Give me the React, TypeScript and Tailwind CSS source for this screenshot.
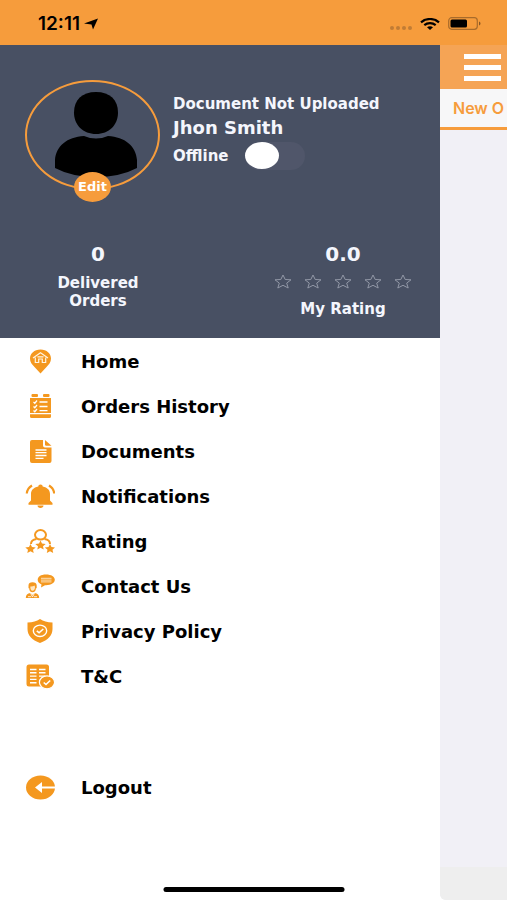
import React, { useState } from "react";

const ORANGE = "#f4981f";

function HomeIcon() {
  return (
    <svg viewBox="0 0 30 28" className="h-7 w-[30px]" fill={ORANGE} aria-hidden="true">
      <path d="M15.500 1.500C9.200 1.500 5 5.500 5 10.500c0 3.500 2 6 4.500 8.500l6 6.500 6-6.500c2.500-2.500 4.500-5 4.500-8.500 0-5-4.200-9-10.500-9z" />
      <path d="M8 10 15.500 4.800 23 10M10.300 9.500v5h3.400V11h3.600v3.500h3.400v-5M12.500 8.800h6" fill="none" stroke="#fff3df" strokeWidth="1.200" />
    </svg>
  );
}

function OrdersIcon() {
  return (
    <svg viewBox="0 0 30 28" className="h-7 w-[30px]" fill={ORANGE} aria-hidden="true">
      <rect x="6.500" y="1" width="6.500" height="3" rx="1" />
      <rect x="18" y="1" width="6.500" height="3" rx="1" />
      <path d="M5 5h21v15H5zM5 21.300h21v2.200q0 1.500-1.500 1.500h-18Q5 25 5 23.500z" />
      <path d="M8.500 9l1.300 1.200L12 7.500M8.500 13.500l1.300 1.200L12 12M8.500 17.500l1.300 1.200L12 16M14.500 9h8M14.500 13.500h8M14.500 17.700h8" fill="none" stroke="#fff" strokeWidth="1.300" />
    </svg>
  );
}

function DocumentIcon() {
  return (
    <svg viewBox="0 0 30 28" className="h-7 w-[30px]" fill={ORANGE} aria-hidden="true">
      <path d="M7 2h11v5.500q0 2 2 2h6.500V23q0 2-2 2H7q-2 0-2-2V4q0-2 2-2z" />
      <path d="M20 2l6.500 5.800h-5.300Q20 7.800 20 6.600z" />
      <path d="M10.500 12h11M10.500 14.700h11M10.500 17.500h11M10.500 20.300h8" stroke="#fff" strokeWidth="1.300" />
    </svg>
  );
}

function BellIcon() {
  return (
    <svg viewBox="0 0 30 28" className="h-7 w-[30px]" fill={ORANGE} aria-hidden="true">
      <path d="M15.500 1.500c1.300 0 2.200.8 2.200 2 5 1 7.300 4 7.300 7.500v6.500l2.500 2.500v1.800h-24V20L6 17.500V11c0-3.500 2.300-6.500 7.300-7.500 0-1.200.9-2 2.200-2zM12.500 22.500h6c0 1.500-1.200 2.500-3 2.500s-3-1-3-2.500z" />
      <path d="M1.800 10.500C2 7.500 3.700 4.500 7 2.500M29.200 10.500c-.2-3-1.900-6-5.200-8" fill="none" stroke={ORANGE} strokeWidth="2.200" />
    </svg>
  );
}

function RatingIcon() {
  return (
    <svg viewBox="0 0 30 28" className="h-7 w-[30px]" fill={ORANGE} aria-hidden="true">
      <ellipse cx="15.500" cy="6.800" rx="5.500" ry="4.800" fill="none" stroke={ORANGE} strokeWidth="2" />
      <path d="M6 16c0-2.500 2-4.500 5.500-5M25 16c0-2.500-2-4.500-5.500-5" fill="none" stroke={ORANGE} strokeWidth="2" />
      <path d="m15.500 12.500 1.500 3 3.700.4-2.700 2.300.7 3.300-3.200-1.700-3.200 1.700.7-3.300-2.700-2.300 3.700-.4z" />
      <path d="m5.500 16 1.500 3 3.700.4L8 21.700l.7 3.300-3.200-1.700L2.300 25l.7-3.300-2.700-2.300L4 19z" />
      <path d="m25 16 1.500 3 3.500.4-2.500 2.300.7 3.300-3.200-1.700-3.200 1.700.7-3.300-2.700-2.300 3.700-.4z" />
    </svg>
  );
}

function ContactIcon() {
  return (
    <svg viewBox="0 0 30 28" className="h-7 w-[30px]" fill={ORANGE} aria-hidden="true">
      <path d="M21 1.500c5.300 0 8.800 2.200 8.800 5.300S26.300 12.200 21 12.200h-1L16 14.500l.5-3c-2.400-.9-3.800-2.700-3.800-4.700 0-3.100 3-5.300 8.300-5.300z" />
      <path d="M16 5.300h10.500M16 7.100h10.500M16 8.900h10.500" stroke="#fff3df" strokeWidth=".8" />
      <path d="M3.500 12.500C3.500 10.500 5 9.300 7.500 9.300s4.200 1.200 4.200 3.200v2.800h-.8c0 2.700-1.400 3.900-3.400 3.900s-3.300-1.200-3.300-3.900h-.7z" />
      <path d="M5.300 13.500q2.500.2 4.200-1l.5 1.500c0 2.300-1 3.700-2.500 3.700s-2.200-1.500-2.200-4.200z" fill="#ffe7c2" />
      <path d="M.8 25c0-3.300 1.500-4.500 4.700-5l2 2 2-2c3.200.5 4.700 1.700 4.700 5z" />
      <path d="M5.500 20l2 4 2-4M3 23.700h3M9 23.700h3" fill="none" stroke="#fff" strokeWidth=".8" />
    </svg>
  );
}

function PrivacyIcon() {
  return (
    <svg viewBox="0 0 30 28" className="h-7 w-[30px]" fill={ORANGE} aria-hidden="true">
      <path d="M15 1c3.500 2.300 7 3.200 12.500 3.500V11c0 6.500-4.500 11-12.500 14C7 22 2.500 17.500 2.500 11V4.500C8 4.200 11.500 3.300 15 1z" />
      <ellipse cx="15" cy="12.800" rx="6.700" ry="5.700" fill="none" stroke="#fff" strokeWidth="1.400" />
      <path d="m11.800 12.800 2.300 2 4.200-3.800" fill="none" stroke="#fff" strokeWidth="1.600" />
    </svg>
  );
}

function TermsIcon() {
  return (
    <svg viewBox="0 0 30 28" className="h-7 w-[30px]" fill={ORANGE} aria-hidden="true">
      <rect x="1.500" y="1.500" width="22.500" height="22" rx="2.500" />
      <path d="M5 6.500h6.500M14 6.500h6.500M5 9.800h6.500M14 9.800h6.500M5 13.100h6.500M14 13.100h6.500M5 16.400h6.500M5 19.700h6.500" stroke="#fff" strokeWidth="1.400" />
      <ellipse cx="22" cy="19.300" rx="7.600" ry="6.500" stroke="#fff" strokeWidth="1.200" />
      <path d="m18.700 19.500 2.300 2 4.200-4" fill="none" stroke="#fff" strokeWidth="1.600" />
    </svg>
  );
}

function LogoutIcon() {
  return (
    <svg viewBox="0 0 30 28" className="h-7 w-[30px]" aria-hidden="true">
      <ellipse cx="15.500" cy="13.500" rx="14.500" ry="12" fill={ORANGE} />
      <path d="M10 13.500 17 8v4.500h13v2H17V19z" fill="#fff" />
    </svg>
  );
}

const items = [
  { label: "Home", Icon: HomeIcon },
  { label: "Orders History", Icon: OrdersIcon },
  { label: "Documents", Icon: DocumentIcon },
  { label: "Notifications", Icon: BellIcon },
  { label: "Rating", Icon: RatingIcon },
  { label: "Contact Us", Icon: ContactIcon },
  { label: "Privacy Policy", Icon: PrivacyIcon },
  { label: "T&C", Icon: TermsIcon },
];

function MenuLink({ label, Icon }: { label: string; Icon: () => React.JSX.Element }) {
  return (
    <a href="#" className="flex h-[45px] items-center gap-[26px] pl-[25px] text-[18px] font-semibold text-black">
      <Icon />
      {label}
    </a>
  );
}

function StatusBar() {
  return (
    <header className="flex h-[45px] items-center justify-between bg-[#f69c3c] pt-0.5 pr-[26px] pl-[38px] text-black">
      <div className="flex items-center gap-1 font-['Inter',sans-serif] text-[19px] leading-6 font-semibold">
        12:11
        <svg viewBox="0 0 14 12" className="h-3 w-3.5" aria-hidden="true">
          <path d="M14 .5 9 11.500 7.500 6.500 0 5.500z" />
        </svg>
      </div>
      <div className="flex items-center gap-2">
        <svg viewBox="0 0 24 14" className="h-3.5 w-6" fill="#c17c35" aria-hidden="true">
          <circle cx="4" cy="11" r="2" />
          <circle cx="10" cy="11" r="2" />
          <circle cx="16" cy="11" r="2" />
          <circle cx="22" cy="11" r="2" />
        </svg>
        <svg viewBox="0 0 20 12" className="h-3 w-5" fill="none" stroke="#000" strokeWidth="2.200" aria-hidden="true">
          <path d="M1 4.300C6-.1 14-.1 19 4.300M4.300 7.200c3.300-2.700 8.100-2.700 11.400 0" />
          <path d="M7 9.300c1.800-1.300 4.200-1.300 6 0l-3 2.700z" fill="#000" stroke="none" />
        </svg>
        <svg viewBox="0 0 33 13" className="h-[13px] w-[33px]" aria-hidden="true">
          <rect x=".7" y=".7" width="28.600" height="11.600" rx="3" fill="none" stroke="#a86b2b" strokeWidth="1.200" />
          <rect x="2.500" y="2.500" width="16.500" height="8" rx="1.500" />
          <path d="M31 4.500c2 .7 2 3.300 0 4z" fill="#8a5824" />
        </svg>
      </div>
    </header>
  );
}

function Profile() {
  const [online, setOnline] = useState(false);
  return (
    <section className="h-[293px] bg-[#485063] pt-[35px] text-[#f4f6fd]">
      <div className="flex gap-[13px] pl-[25px]">
        <div className="relative h-[110px] w-[135px] shrink-0 rounded-[50%] border-2 border-[#f69c3c]">
          <svg viewBox="0 0 84 86" className="absolute top-[9px] left-[27px] h-[86px] w-[84px]" aria-hidden="true">
            <path d="M42 1c14 0 22 8 22 20.500S55 43 42 43 20 34 20 21.500 28 1 42 1z" />
            <path d="M30 45q12 5 24 0c17 1 28 10 29 24v8Q66 86 42 86T1 77v-8C2 55 13 46 30 45z" />
          </svg>
          <button className="absolute top-[90px] left-[47px] h-[30px] w-[37px] rounded-[50%] bg-[#f69c3c] text-[13px] font-semibold text-white">
            Edit
          </button>
        </div>
        <div className="pt-3.5 font-semibold">
          <p className="text-[15px] leading-5">Document Not Uploaded</p>
          <p className="text-[18px] leading-7">Jhon Smith</p>
          <label className="flex h-7 items-center gap-4 text-[15px]">
            Offline
            <input
              type="checkbox"
              role="switch"
              checked={online}
              onChange={() => setOnline(!online)}
              className="h-7 w-[60px] appearance-none rounded-full bg-[#50566a] before:block before:h-[27px] before:w-[34px] before:rounded-[50%] before:bg-white checked:bg-[#f69c3c] checked:before:ml-auto"
            />
          </label>
        </div>
      </div>
      <div className="mt-[52px] flex justify-between pr-[28px] pl-[47px] text-center font-semibold">
        <div className="w-[102px]">
          <p className="text-[20px] leading-6">0</p>
          <p className="mt-2 text-[15px] leading-[18px]">Delivered Orders</p>
        </div>
        <div>
          <p className="text-[20px] leading-6">0.0</p>
          <div className="mt-2 flex gap-3" role="img" aria-label="0 of 5 stars">
            {[1, 2, 3, 4, 5].map((n) => (
              <svg key={n} viewBox="0 0 18 15" className="h-[15px] w-[18px]" fill="none" stroke="#9197a6" aria-hidden="true">
                <path d="M9 1l2.200 4.500 5.800.3-4.300 3.300 1.500 4.900L9 11.300 3.800 14l1.500-4.900L1 5.800l5.800-.3z" />
              </svg>
            ))}
          </div>
          <p className="mt-[11px] text-[15px] leading-[18px]">My Rating</p>
        </div>
      </div>
    </section>
  );
}

export default function App() {
  return (
    <div className="relative flex min-h-screen flex-col bg-white font-['DejaVu_Sans',sans-serif]">
      <StatusBar />
      <div className="flex flex-1">
        <aside className="min-w-0 flex-1 bg-white pb-12">
          <Profile />
          <nav className="pt-px">
            {items.map((item) => (
              <MenuLink key={item.label} {...item} />
            ))}
            <div className="mt-[66px]">
              <MenuLink label="Logout" Icon={LogoutIcon} />
            </div>
          </nav>
        </aside>
        <main className="flex w-[67px] shrink-0 flex-col overflow-hidden rounded-bl-md bg-[#f1f0f6]">
          <div className="flex h-11 items-center justify-end bg-[#f5a455] pr-1.5">
            <button aria-label="Menu" className="flex w-[37px] flex-col gap-1.5">
              <span className="h-[5px] bg-white" />
              <span className="h-[5px] bg-white" />
              <span className="h-[5px] bg-white" />
            </button>
          </div>
          <button className="h-[41px] shrink-0 border-b-[3px] border-[#f69c3c] bg-[#f7f7f8] pl-[13px] text-left font-['Inter',sans-serif] text-[16px] font-semibold whitespace-nowrap text-[#f69c3c]">
            New O
          </button>
          <div className="mt-auto h-[33px] bg-[#eeeeee]" />
        </main>
      </div>
      <div className="absolute bottom-2 left-1/2 h-[5px] w-[181px] -translate-x-1/2 rounded-full bg-black" />
    </div>
  );
}
